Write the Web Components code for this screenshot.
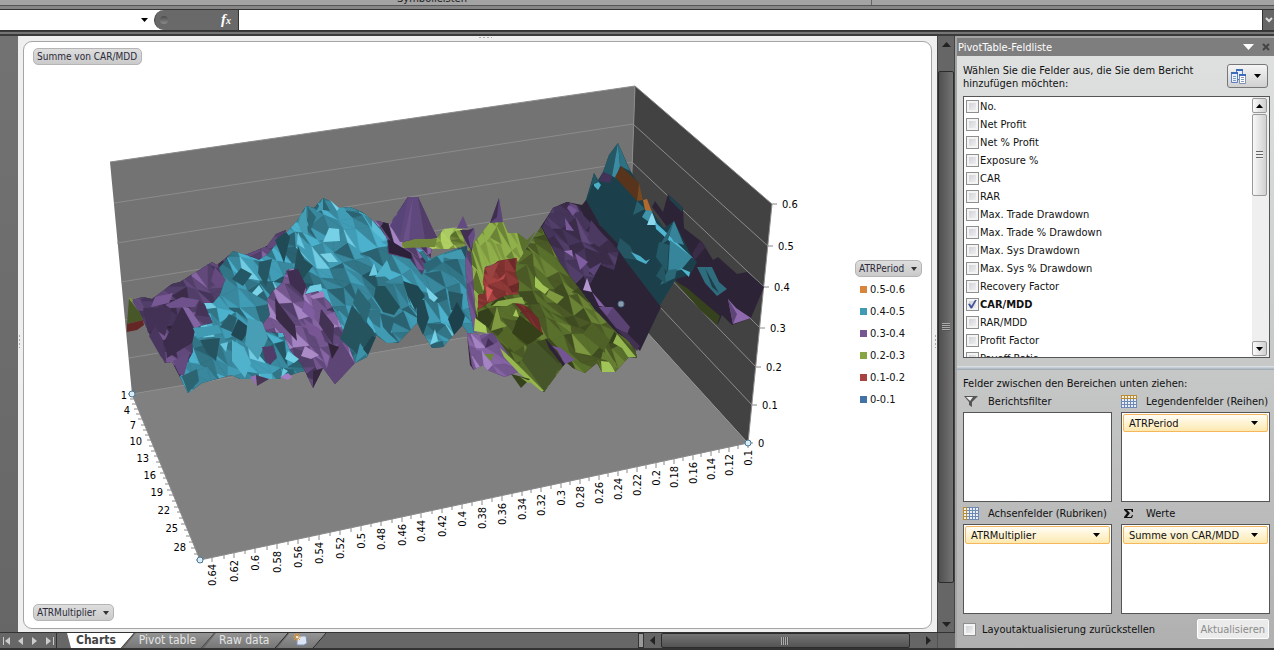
<!DOCTYPE html>
<html lang="de">
<head>
<meta charset="utf-8">
<title>PivotChart</title>
<style>
  html, body { height: 100%; margin: 0; }
  body {
    font: 11px/13px "DejaVu Sans Condensed", "Noto Sans", sans-serif;
    color: #111;
    background: #686868;
    overflow: hidden;
  }
</style>
</head>
<body>
<excel-window>
  <formula-bar slot="formula"></formula-bar>
  <pivot-chart slot="chart"></pivot-chart>
  <sheet-tabs slot="tabs"></sheet-tabs>
  <field-list slot="pane"></field-list>
</excel-window>

<script>
class ExcelWindow extends HTMLElement {
  constructor() {
    super();
    this.attachShadow({ mode: 'open' }).innerHTML = `
      <style>
        :host { display: flex; flex-direction: column; height: 100vh; }
        .ribbon {
          display: flex;
          flex: none;
          height: 5px;
          overflow: hidden;
          background: #a3a3a3;
          border-bottom: 1px solid #555;
        }
        .group {
          display: flex;
          align-items: flex-end;
          justify-content: center;
          flex: none;
          width: 872px;
          padding-right: 7px;
          box-sizing: border-box;
          border-right: 1px solid #666;
          color: #222;
        }
        .band { flex: none; height: 3px; background: #858585; border-bottom: 1px solid #333; }
        .gap { flex: none; height: 2px; background: #757575; border: solid #3a3a3a; border-width: 1px 0 2px; }
        .main { display: flex; flex: 1; min-height: 0; }
        .left { display: flex; flex-direction: column; flex: 1; min-width: 0; }
        .sheet { display: flex; flex: 1; min-height: 0; }
        .gutter { width: 18px; flex: none; background: linear-gradient(#727272, #666); }
        ::slotted(pivot-chart) { flex: 1; min-width: 0; }
        .foot { flex: none; height: 2px; background: #333; }
      </style>
      <div class="ribbon"><div class="group">Symbolleisten</div></div>
      <div class="band"></div>
      <slot name="formula"></slot>
      <div class="gap"></div>
      <div class="main">
        <div class="left">
          <div class="sheet">
            <div class="gutter"></div>
            <slot name="chart"></slot>
            <dark-scroll vertical></dark-scroll>
          </div>
          <slot name="tabs"></slot>
        </div>
        <slot name="pane"></slot>
      </div>
      <div class="foot"></div>
    `;
  }
}

class FormulaBar extends HTMLElement {
  constructor() {
    super();
    this.attachShadow({ mode: 'open' }).innerHTML = `
      <style>
        :host { display: flex; flex: none; height: 20px; background: #fff; border-bottom: 1px solid #333; }
        input { border: 0; padding: 0 4px; outline: 0; font: inherit; background: #fff; min-width: 0; box-sizing: border-box; }
        .name { width: 134px; }
        button { border: 0; padding: 0; background: none; }
        .drop { width: 20px; }
        .fx {
          display: flex;
          justify-content: space-between;
          align-items: center;
          width: 85px;
          padding: 0 7px 0 5px;
          box-sizing: border-box;
          background: #696969;
          border-left: 1px solid #444;
          border-right: 1px solid #333;
          border-radius: 10px 0 0 10px;
          color: #fff;
          font: italic bold 15px/18px "Liberation Serif", serif;
        }
        .fx i { width: 8px; height: 8px; border-radius: 4px; background: linear-gradient(#4c4c4c, #8a8a8a); }
        .fx small { font-size: 10px; }
        .text { flex: 1; }
        .expand { width: 12px; background: #666; border-left: 1px solid #333; }
        svg { display: block; margin: auto; }
      </style>
      <input class="name" aria-label="Namenfeld">
      <button class="drop" aria-label="Namen"><svg width="7" height="4"><path d="M0 0h7L3.500 4z" fill="#000"/></svg></button>
      <div class="fx"><i></i><span>f<small>x</small></span></div>
      <input class="text" aria-label="Bearbeitungsleiste">
      <button class="expand" aria-label="Erweitern"><svg width="8" height="6"><path d="M1 1l3 3 3-3" fill="none" stroke="#ddd" stroke-width="2"/></svg></button>
    `;
  }
}

class DarkScroll extends HTMLElement {
  constructor() {
    super();
    this.attachShadow({ mode: 'open' }).innerHTML = `
      <style>
        :host { display: flex; flex: none; background: #666; box-sizing: border-box; }
        :host([vertical]) { flex-direction: column; width: 18px; border: solid #444; border-width: 0 1px; }
        button { border: 0; padding: 0; background: none; flex: none; width: 17px; }
        svg { display: block; margin: auto; }
        .track { flex: 1; display: flex; }
        .thumb {
          display: flex;
          align-items: center;
          justify-content: center;
          box-sizing: border-box;
          border: 1px solid #2c2c2c;
          border-radius: 2px;
          background: linear-gradient(#747474, #545454);
        }
        :host([vertical]) button { width: 16px; height: 16px; }
        :host([vertical]) .track { flex-direction: column; padding-top: 19px; }
        :host([vertical]) .thumb { height: 94%; flex: none; width: 16px; background: linear-gradient(90deg, #4f4f4f, #747474); }
        :host(:not([vertical])) .thumb { width: 96%; }
        .grip { width: 8px; height: 8px; background: repeating-linear-gradient(90deg, #aaa 0 1px, #555 1px 2px); }
        :host([vertical]) .grip { background: repeating-linear-gradient(#aaa 0 1px, #555 1px 2px); }
      </style>
      <button class="a"></button>
      <div class="track"><div class="thumb"><div class="grip"></div></div></div>
      <button class="b"></button>
    `;
  }

  connectedCallback() {
    const v = this.hasAttribute('vertical');
    const arrows = v ? ['M0 6h9L4.500 1z', 'M0 1h9L4.500 6z'] : ['M6 0v9L1 4.500z', 'M1 0v9L6 4.500z'];
    this.shadowRoot.querySelectorAll('button').forEach((b, i) => {
      b.setAttribute('aria-label', i ? 'Weiter' : 'Zurück');
      b.innerHTML = `<svg width="${v ? 9 : 7}" height="${v ? 7 : 9}"><path d="${arrows[i]}" fill="#222"/></svg>`;
    });
  }
}

class SheetTabs extends HTMLElement {
  constructor() {
    super();
    this.attachShadow({ mode: 'open' }).innerHTML = `
      <style>
        :host { display: flex; flex: none; height: 16px; box-sizing: border-box; background: #676767; border-top: 1px solid #333; }
        button { border: 0; padding: 0; background: none; color: #e4e4e4; }
        .nav { display: flex; width: 56px; flex: none; border-right: 1px solid #333; }
        .nav button { width: 14px; }
        .nav svg { display: block; margin: auto; }
        .tabs { display: flex; flex: 1; padding-left: 10px; min-width: 0; }
        .tab {
          flex: none;
          height: 15px;
          padding: 0 18px 0 15px;
          font: 12px/15px "DejaVu Sans Condensed", sans-serif;
          background: linear-gradient(#949494, #777);
          clip-path: polygon(0 100%, 12px 0, 100% 0, calc(100% - 13px) 100%);
          margin-left: -10px;
        }
        .edge { flex: none; width: 14px; height: 15px; margin-left: -14px; }
        .tab.on { background: #fff; color: #444; font-weight: bold; clip-path: polygon(0 0, 100% 0, calc(100% - 13px) 100%, 4px 100%); padding-left: 9px; margin-left: 0; }
        .split { width: 4px; flex: none; border: 1px solid #333; background: #999; }
        dark-scroll { width: 293px; }
        .corner { width: 18px; flex: none; border-left: 1px solid #505050; box-sizing: border-box; }
      </style>
      <div class="nav">
        <button aria-label="Erstes Blatt"><svg width="9" height="8"><path d="M0 0h1v8H0zM7 0v8L2 4z" fill="#ccc"/></svg></button>
        <button aria-label="Vorheriges Blatt"><svg width="6" height="8"><path d="M5 0v8L0 4z" fill="#ccc"/></svg></button>
        <button aria-label="Nächstes Blatt"><svg width="6" height="8"><path d="M0 0v8l5-4z" fill="#ccc"/></svg></button>
        <button aria-label="Letztes Blatt"><svg width="9" height="8"><path d="M8 0h1v8H8zM1 0v8l5-4z" fill="#ccc"/></svg></button>
      </div>
      <div class="tabs">
        <button class="tab on">Charts</button>
        <svg class="edge"><path d="M14 0L1 15" stroke="#222"/></svg>
        <button class="tab">Pivot table</button>
        <svg class="edge"><path d="M14 0L1 15" stroke="#222"/></svg>
        <button class="tab">Raw data</button>
        <svg class="edge"><path d="M14 0L1 15" stroke="#222"/></svg>
        <button class="tab" aria-label="Neues Blatt"><svg width="15" height="14"><path d="M4 3h9l1 7-3 2H4z" fill="#dbe5f5" stroke="#7d93b5"/><path d="M4 0v8M0 4h8M1 1l6 6M7 1L1 7" stroke="#e69a2e"/><circle cx="4" cy="4" r="1" fill="#fff"/></svg></button>
        <svg class="edge"><path d="M14 0L1 15" stroke="#222"/></svg>
      </div>
      <div class="split"></div>
      <dark-scroll></dark-scroll>
      <div class="corner"></div>
    `;
  }
}

const CYAN = ['#1c404b', '#245461', '#2a6271', '#317586', '#39889e', '#419cb6', '#4cb1cd', '#70cce3'];
const PURPLE = ['#2d2337', '#3b2d49', '#46355a', '#523f69', '#614a7b', '#74578f', '#8765a5', '#a484c2'];
const GREEN = ['#36411d', '#3f4c21', '#4a5926', '#59702d', '#6b8336', '#7d9840', '#90b04b', '#b0d063'];
const RED = ['#5c2423', '#6c2a29', '#7d3130', '#8d3937', '#a34140', '#d15f5d'];
const DARK_GREEN = GREEN.slice(0, 6);
const DARK_PURPLE = PURPLE.slice(0, 5);
const STREAKS = GREEN.slice(3, 7);

// Bands of the surface, back to front: palette, outline, cell width, cell height, light bias.
// A band without a cell size is one flat plane.
const BANDS = [
  [[PURPLE[0]], '652,207 655,201 663,212 668,194 683,208 684,228 702,242 713,260 718,257 737,274 747,272 764,287 751,318 732,325 722,315 718,324 675,280 690,257'],
  [[GREEN[0]], '675,281 687,288 720,316 717,325 700,310'],
  [PURPLE, '374,220 390,224 408,197 418,197 437,238 432,248 428,270 422,277 410,260 388,255 386,240', 9, 16, -.1],
  [GREEN, '402,243 410,240 437,238 443,230 450,228 462,229 465,246 450,249 432,249 425,245 403,248', 9, 8, .2],
  [[CYAN[0]], '585,203 594,173 598,180 603,172 609,155 618,143 630,170 638,183 645,205 652,211 664,228 674,221 692,257 697,262 690,275 676,279 659,307 640,290 625,268 615,250 600,225'],
  [[PURPLE[0]], '540,228 553,208 567,202 582,205 586,200 600,225 617,243 625,260 661,307 640,351 632,343 617,333 595,310 578,287 560,263'],
  [DARK_PURPLE, '542,227 553,208 567,202 579,206 584,216 598,230 610,241 619,251 614,270 600,265 591,283 578,287 560,263', 12, 14, -.15],
  [DARK_GREEN, '541,227 560,263 578,287 595,310 617,333 634,344 637,358 629,357 615,372 602,372 597,363 585,373 573,368 566,362 544,392 520,372 507,357 493,335 475,323 474,290 480,270 517,262', 11, 13, -.15],
  [STREAKS, '468,250 482,233 490,222 503,222 508,233 518,233 527,240 536,231 518,262 516,258 486,266 485,285 476,312 473,290', 5, 26, .15],
  [RED, '485,267 492,266 498,261 517,258 515,273 519,283 518,294 507,295 495,300 488,303 478,310 478,295 486,293 483,283', 11, 11, -.05],
  [RED.slice(0, 4), '513,301 527,307 538,318 543,335 530,322 522,312', 10, 12, -.2],
  [PURPLE.slice(3), '467,333 480,335 493,333 505,350 518,372 505,377 487,370 483,365 473,370', 10, 11, 0],
  [PURPLE.slice(3, 6), '467,250 471,252 477,333 468,333 463,270', 6, 30, .1],
  [PURPLE, '132,300 143,297 152,299 172,284 180,282 212,262 217,265 232,253 243,256 267,246 276,234 286,230 275,255 240,270 225,280 220,300 213,325 200,333 194,352 187,363 180,377 172,362 165,363 150,335 140,313', 15, 12, -.15],
  [CYAN, '219,268 233,251 246,255 259,260 268,254 285,234 297,221 306,206 314,208 323,198 332,202 339,208 350,207 362,212 372,220 380,228 387,239 388,254 410,259 422,275 427,263 416,248 422,250 430,259 447,252 467,246 465,260 467,297 474,333 468,333 462,325 443,347 432,348 417,323 398,343 387,343 376,335 367,357 355,363 300,372 278,379 240,379 231,375 202,383 188,393 180,377 187,363 193,352 192,328 213,323 204,303 213,303 220,295 225,280', 13, 14, -.02],
  [PURPLE, '287,270 297,268 307,288 305,295 317,290 330,303 340,323 355,363 335,384 323,368 313,388 302,365 290,350 283,333 267,332 262,325 270,315 267,300 272,292 282,283', 13, 14, .1]
];

// Single facets drawn over the bands
const FACETS = [
  ['#1f414b', '668,194 683,208 682,212 670,200'], ['#2f6d7e', '697,267 712,267 719,282 727,289 717,296 705,283'],
  ['#1d3f4a', '705,268 719,293 712,287'], ['#8e69ad', '728,299 736,308 751,318 733,324'], ['#5d4577', '728,299 737,314 733,324'],
  ['#3a2b46', '700,241 706,247 695,260 692,254'],
  ['#265765', '618,143 609,155 603,172 612,176'], ['#3b8ba2', '618,143 612,176 616,178 620,166'], ['#2f7083', '618,143 630,171 620,166'],
  ['#43325a', '603,172 612,176 610,183 599,181'], ['#57341b', '621,166 639,183 637,201 615,177'], ['#7a481f', '639,183 643,200 637,201'],
  ['#b3692d', '643,200 647,199 652,212 645,210'], ['#4cafc9', '594,183 597,180 601,185 598,190 594,186'],
  ['#245561', '594,173 599,182 592,185 587,200'], ['#29606f', '637,201 645,209 633,215'], ['#3f94aa', '646,210 652,211 649,222 642,217'],
  ['#8ad9ed', '652,212 657,225 647,225'], ['#4fb7d2', '655,222 670,236 694,259 676,247 656,229'], ['#37839a', '674,221 684,245 674,242 668,232'],
  ['#2b6575', '674,221 668,240 660,245'], ['#37859b', '670,240 692,257 681,270 668,272'], ['#245a68', '659,242 669,245 667,272 656,257'],
  ['#2b6979', '668,270 677,269 675,278 660,285'], ['#245663', '664,262 666,284 656,276'], ['#51b9d3', '680,268 690,272 689,277'],
  ['#255562', '620,238 630,246 637,260 624,258 617,248'], ['#4cafca', '631,252 640,256 646,261 650,259 646,264 637,260'],
  ['#b495d0', '587,278 592,292 583,290'], ['#8763a8', '592,292 605,307 599,306'], ['#5a4373', '599,307 613,307 630,327 627,334 616,328'],
  ['#6a4e87', '599,307 613,307 607,316'], ['#423153', '616,329 627,333 640,346 637,351 629,342'],
  ['#735693', '569,205 577,210 573,216 567,208'], ['#79599a', '565,218 574,231 566,230'], ['#4c3961', '591,220 600,231 608,240 599,247 588,239'],
  ['#7e5ea0', '575,253 588,262 580,270'], ['#9670b7', '564,251 572,250 573,257'], ['#5c4579', '588,270 602,262 594,276'],
  ['#5b4478', '499,198 503,222 490,223'], ['#3e2f50', '499,198 497,217 490,223'], ['#634a80', '463,216 468,228 457,228'],
  ['#422f51', '460,230 468,230 474,228 472,252 466,242'], ['#654b84', '474,228 475,235 471,250 468,237'],
  ['#5f487c', '408,197 418,197 437,238 400,242 390,225'], ['#513d68', '418,197 437,238 425,239'], ['#6b5189', '413,197 409,240 403,241'],
  ['#59447a', '408,197 400,238 390,226'], ['#a9ca66', '443,229 455,228 449,238'], ['#70863a', '402,243 415,239 437,239 435,247 404,248'],
  ['#2c2138', '388,239 411,253 412,259 389,253'],
  ['#9a4340', '485,268 499,262 491,281'], ['#cf5a58', '486,286 493,290 487,302'], ['#b04a48', '497,281 506,273 504,279'],
  ['#343f1b', '478,312 488,308 494,316 489,328 478,323'], ['#a9cb5c', '475,318 486,326 487,333 474,331'],
  ['#7f9a41', '497,306 501,321 507,326 491,331'], ['#354019', '519,315 533,325 543,334 534,341 527,345 512,333'],
  ['#536627', '507,326 515,338 525,345 514,352 497,337'], ['#a5c65a', '516,309 519,317 513,316'], ['#8cab4b', '498,301 522,297 525,304 513,303 507,306 492,306'],
  ['#a2c457', '535,276 543,285 549,289 545,294 535,287'], ['#7e9940', '549,290 564,297 557,304 546,296'], ['#47562a', '528,344 547,345 563,363 544,392 520,365'],
  ['#3b4820', '536,342 549,338 564,354 559,364'], ['#566a2c', '521,359 544,391 518,371'], ['#96b74e', '500,348 512,359 544,391 541,391 518,372 504,357'],
  ['#506127', '592,322 610,340 604,351 583,334'], ['#94b74f', '617,334 636,357 628,357 622,348 613,343'], ['#a0c457', '601,361 610,362 615,372 602,372'],
  ['#657e34', '603,351 616,363 615,370 608,361 601,359'], ['#745594', '549,345 561,348 575,360 565,364 557,350'], ['#2e2139', '545,338 553,347 565,364 563,366 549,348'],
  ['#36421b', '511,374 530,379 521,388'], ['#8ba94a', '520,377 533,382 528,383'], ['#36223e', '467,335 472,366 474,370 470,365'],
  ['#6b843a', '484,354 494,354 491,361'], ['#462f5a', '488,338 494,344 485,348'],
  ['#7b9a3e', '129,297 133,300 131,304'], ['#475728', '129,299 140,313 143,320 127,324'], ['#642725', '127,324 143,320 144,325 137,330 127,332'],
  ['#433255', '143,308 172,307 165,336 154,329 148,333'], ['#3b2c4b', '182,306 195,331 192,343 167,358 165,340'], ['#8465a4', '182,306 189,308 201,325 195,329'],
  ['#453458', '199,301 205,305 209,317 195,315'], ['#6f528c', '165,305 182,297 199,300 195,307 170,308'], ['#493760', '149,336 155,326 163,340 166,361 161,357'],
  ['#634a7f', '173,361 190,352 184,376 179,374'], ['#785795', '155,297 173,293 169,303 151,307'], ['#66497f', '215,267 226,280 218,288 211,281'],
  ['#2c6472', '182,376 197,369 199,381 188,393'], ['#409ab2', '193,328 218,325 222,333 197,338'], ['#265360', '200,340 220,338 216,361 207,353'],
  ['#2a5d6b', '220,327 229,314 237,318 232,332'], ['#204753', '238,319 250,328 242,341 231,335'], ['#255866', '241,268 252,274 243,286 232,279'],
  ['#65c5dc', '220,344 228,342 226,352'], ['#51b2cb', '232,340 244,347 251,363 245,378 232,361'], ['#489eb5', '248,318 262,322 268,338 258,360 245,344'],
  ['#7ad3e7', '259,285 263,291 257,296 252,293'], ['#255663', '259,262 272,259 266,287 258,273'], ['#71cfe5', '288,351 299,359 294,363 285,359'],
  ['#67c8df', '283,368 288,371 281,378'], ['#a77cc6', '280,377 288,373 292,377 288,380'], ['#513b68', '262,347 273,346 277,357 270,365 265,360'],
  ['#9470b1', '250,377 256,375 256,385'], ['#493556', '256,375 269,379 257,386'], ['#204a56', '275,240 286,232 290,237 284,263'],
  ['#459db3', '306,206 308,235 301,231 298,224'], ['#2c6776', '307,206 316,217 309,234'], ['#429bb2', '323,198 323,210 316,212'],
  ['#2a6371', '323,198 330,211 323,210'], ['#76d2e8', '330,200 339,208 337,211'], ['#77d1e6', '329,228 339,229 340,241 323,242'],
  ['#78d0e4', '320,254 331,253 338,262 328,262'], ['#68c7df', '298,232 305,249 297,244'], ['#6fcce2', '310,286 321,284 322,290 305,294'],
  ['#234f5b', '298,246 303,258 313,266 302,280 294,270'], ['#a380bd', '310,296 323,291 325,297 313,299'], ['#aa8bc5', '301,356 305,346 319,355 311,359'],
  ['#392a46', '275,298 295,325 297,341 276,319'], ['#3f2e4f', '287,271 298,269 306,286 303,296 290,284'], ['#433253', '321,309 334,325 333,345 319,324'],
  ['#36273f', '313,371 323,368 313,388'], ['#5d4575', '330,355 341,341 355,363 335,384 326,372'], ['#312439', '328,343 339,347 332,359'],
  ['#785694', '303,318 320,329 325,341 309,334'], ['#805ca0', '305,300 315,311 314,321 302,311'],
  ['#25545f', '352,305 373,330 375,335 360,357 340,339'], ['#3c92a9', '360,343 367,353 355,363'], ['#1f4550', '372,336 376,337 368,355 363,349'],
  ['#2a6673', '358,288 371,305 366,324 353,303'], ['#6dcbe1', '374,263 378,275 369,276'], ['#4db1ca', '387,260 393,276 375,277'],
  ['#215059', '376,286 385,286 400,307 394,315 383,312 374,297'], ['#1e4751', '403,281 418,286 425,296 415,310 409,301'], ['#2a6170', '380,313 395,318 390,335 383,327'],
  ['#409ab1', '372,323 388,333 398,342 387,343 377,335'], ['#204852', '417,300 424,300 429,318 423,335 417,322'], ['#79d2e7', '426,287 438,298 434,302 429,298'],
  ['#76d0e6', '435,329 438,341 430,345'], ['#265763', '448,291 463,294 461,311 451,310'], ['#1c414c', '457,302 465,316 462,326 454,335 448,319'],
  ['#59b9d0', '408,296 415,310 412,307'], ['#5bbdd6', '372,220 386,237 384,241 372,230'], ['#2b6776', '423,264 437,256 442,263 427,273'],
  ['#419ab0', '439,256 461,249 466,259 450,259'], ['#27515e', '463,250 467,246 466,260']
];

const BACK_AXIS = [[110, 162, 635, 86, 772, 204], [114, 203, 633, 124, 768, 246], [117, 243, 632, 162, 764, 287], [121, 282, 631, 199, 760, 328], [125, 320, 629, 236, 756, 367], [129, 358, 628, 273, 752, 405], [132, 394, 627, 310, 748, 443]];
const PERIODS = [[1, 126, 399], [4, 129, 414], [7, 135, 429], [10, 141, 445], [13, 148, 462], [16, 155, 479], [19, 162, 496], [22, 169, 514], [25, 177, 532], [28, 185, 551]];
const MULTIPLIER_X = [212, 234, 255, 277, 298, 319, 340, 361, 381, 402, 421, 442, 462, 482, 502, 522, 541, 561, 580, 599, 618, 637, 656, 674, 693, 711, 729, 748];

function hash(a, b, c) {
  const s = Math.sin(a * 127.1 + b * 311.7 + c * 74.7) * 43758.5453;
  return s - Math.floor(s);
}

class SurfacePlot extends HTMLElement {
  constructor() {
    super();
    this.attachShadow({ mode: 'open' }).innerHTML = `
      <style>
        :host { display: block; overflow: hidden; }
        svg { display: block; width: 100%; height: 100%; }
        text { font: 11px "DejaVu Sans Condensed", sans-serif; fill: #000; }
      </style>
      <svg role="img" aria-label="Summe von CAR/MDD"><g transform="translate(-24 -42)">${this.room()}${this.surface()}${this.axes()}</g></svg>
    `;
  }

  room() {
    const lines = BACK_AXIS.slice(1, 6).map(a =>
      `<path d="M${a[0]} ${a[1]}L${a[2]} ${a[3]}L${a[4]} ${a[5]}" fill="none" stroke="#8b8b8b"/>`).join('');
    return `
      <path d="M110 162L635 86L627 310L132 394z" fill="#737373"/>
      <path d="M635 86L772 204L748 443L627 310z" fill="#424242"/>
      <path d="M132 394L627 310L748 443L200 560z" fill="#808080"/>
      ${lines}
      <path d="M110 162L635 86L772 204L748 443M635 86L627 310M132 394L627 310" fill="none" stroke="#8b8b8b"/>`;
  }

  surface() {
    const bands = BANDS.map((b, i) => this.band(b, i)).join('');
    const facets = FACETS.map(f => `<polygon points="${f[1]}" fill="${f[0]}"/>`).join('');
    return bands + facets;
  }

  band([palette, outline, w, h, bias], index) {
    const base = `<polygon points="${outline}" fill="${palette[0]}"/>`;
    if (!w) return base;
    const pts = outline.split(' ').map(p => p.split(',').map(Number));
    const x0 = Math.min(...pts.map(p => p[0])) - 30, x1 = Math.max(...pts.map(p => p[0])) + 20;
    const y0 = Math.min(...pts.map(p => p[1])) - 20, y1 = Math.max(...pts.map(p => p[1])) + 40;
    const rows = Math.ceil((y1 - y0) / h), cols = Math.ceil((x1 - x0) / w) + 8;
    // each row leans to the right, as the depth axis does
    const node = (r, c) => [
      x0 - 60 - rows * h * .4 + c * w + r * h * .4 + (hash(r, c, index) - .5) * w * .5,
      y0 + r * h + (hash(c, r, index + 9) - .5) * h * 1.1
    ];
    let out = '';
    const tri = (a, b, c, seed, cell) => {
      const tilt = (b[1] - a[1]) / w * .2 + (seed - .5) * .2 + (cell - .5) * .45;
      const k = Math.round((.5 + bias + tilt) * (palette.length - 1));
      const fill = palette[Math.max(0, Math.min(palette.length - 1, k))];
      const d = [a, b, c].map(p => p.map(Math.round).join()).join(' ');
      out += `<polygon points="${d}" fill="${fill}" stroke="${fill}" stroke-width=".6"/>`;
    };
    for (let r = 0; r < rows; r++) {
      for (let c = 0; c < cols + rows; c++) {
        const a = node(r, c), b = node(r, c + 1), d = node(r + 1, c), e = node(r + 1, c + 1);
        const cell = hash(r, c, 11 + index);
        tri(a, b, e, hash(r, c, 3 + index) + .2, cell);
        tri(a, e, d, hash(r, c, 5 + index) - .2, cell);
      }
    }
    return `${base}<clipPath id="band${index}"><polygon points="${outline}"/></clipPath><g clip-path="url(#band${index})">${out}</g>`;
  }

  axes() {
    let out = '<path d="M132 394L200 560L748 443" fill="none" stroke="#888"/>';
    BACK_AXIS.forEach((a, i) => {
      out += `<path d="M${a[4]} ${a[5]}h5" stroke="#888"/><text x="${a[4] + 10}" y="${a[5] + 4}">${i === 6 ? 0 : (6 - i) / 10}</text>`;
    });
    for (let i = 0; i <= 30; i++) {
      const t = i / 30 * (.9 + .1 * i / 30);
      const x = Math.round(132 + 68 * t), y = Math.round(394 + 166 * t);
      out += `<path d="M${x} ${y}h-4" stroke="#888"/>`;
    }
    PERIODS.forEach(([n, x, y]) => { out += `<text x="${x + 1}" y="${y}" text-anchor="end">${n}</text>`; });
    MULTIPLIER_X.forEach((x, i) => {
      const y = Math.round(560 - (x - 200) * .2135);
      out += `<path d="M${x} ${y}v5M${x - 10} ${y + 2}v4" stroke="#888"/>`;
      out += `<text transform="translate(${x + 4} ${y + 7}) rotate(-90)" text-anchor="end">${(64 - 2 * i) / 100}</text>`;
    });
    [[132, 394], [200, 560], [748, 443], [621, 304]].forEach(([x, y]) => {
      out += `<circle cx="${x}" cy="${y}" r="3" fill="${x === 621 ? '#8f9ba6' : '#d8edf5'}" stroke="#4a7597"/>`;
    });
    return out;
  }
}

class PivotButton extends HTMLElement {
  constructor() {
    super();
    this.attachShadow({ mode: 'open' }).innerHTML = `
      <style>
        :host { display: block; width: max-content; }
        button {
          display: flex;
          align-items: center;
          gap: 7px;
          height: 17px;
          padding: 0 4px 0 3px;
          border: 1px solid #b5b5b5;
          border-radius: 5px;
          background: linear-gradient(#dedede, #cacaca);
          font: 10px/13px "DejaVu Sans Condensed", sans-serif;
          color: #2a2a3a;
          white-space: nowrap;
        }
        :host(:not([menu])) svg { display: none; }
      </style>
      <button><slot></slot><svg width="6" height="4"><path d="M0 0h6L3 4z" fill="#333"/></svg></button>
    `;
  }
}

class PivotChart extends HTMLElement {
  constructor() {
    super();
    const legend = [['0.5-0.6', '#d9853b'], ['0.4-0.5', '#3f9bb3'], ['0.3-0.4', '#745693'], ['0.2-0.3', '#87a543'], ['0.1-0.2', '#a74341'], ['0-0.1', '#4272a6']];
    this.attachShadow({ mode: 'open' }).innerHTML = `
      <style>
        :host { display: flex; position: relative; padding: 5px 5px 3px; background: #efefef; box-sizing: border-box; }
        .area { flex: 1; display: flex; min-width: 0; border: 1px solid #a5a5a5; border-radius: 9px; background: #fff; overflow: hidden; }
        surface-plot { flex: 1; }
        .value { position: absolute; left: 15px; top: 12px; }
        .axis { position: absolute; left: 15px; bottom: 11px; }
        .legend { position: absolute; right: 13px; top: 224px; width: 69px; }
        ul { list-style: none; margin: 0; padding: 1px 0 0 5px; }
        li { display: flex; align-items: center; gap: 3px; height: 22px; }
        li i { width: 7px; height: 7px; }
        .grip { position: absolute; width: 14px; height: 3px; background: radial-gradient(circle, #aaa 1px, transparent 1px) 0 0 / 4px 3px; }
        .top { top: 0; left: 50%; }
        .side { width: 3px; height: 14px; top: 50%; background-size: 3px 4px; }
        .l { left: 0; }
        .r { right: 0; }
      </style>
      <div class="area"><surface-plot></surface-plot></div>
      <pivot-button class="value">Summe von CAR/MDD</pivot-button>
      <div class="legend">
        <pivot-button menu>ATRPeriod</pivot-button>
        <ul>${legend.map(l => `<li><i style="background:${l[1]}"></i>${l[0]}</li>`).join('')}</ul>
      </div>
      <pivot-button class="axis" menu>ATRMultiplier</pivot-button>
      <div class="grip top"></div><div class="grip side l"></div><div class="grip side r"></div>
    `;
  }
}

class FieldItem extends HTMLElement {
  constructor() {
    super();
    this.attachShadow({ mode: 'open' }).innerHTML = `
      <style>
        :host { display: block; }
        label { display: flex; align-items: center; gap: var(--gap, 1px); height: 18px; white-space: nowrap; }
        :host([checked]) label { font-weight: bold; }
        input {
          appearance: none;
          width: 13px;
          height: 13px;
          margin: 0;
          flex: none;
          border: 1px solid #8e8f8f;
          background: linear-gradient(135deg, #c8ccd2, #f6f6f6);
          box-shadow: inset 0 0 0 2px #f4f4f4;
        }
        input:checked::after {
          content: "";
          display: block;
          width: 9px;
          height: 9px;
          margin: 1px;
          background: #43559b;
          clip-path: polygon(0 50%, 20% 45%, 38% 70%, 80% 0, 100% 0, 45% 100%, 30% 100%);
        }
      </style>
      <label><input type="checkbox"><span><slot></slot></span></label>
    `;
  }

  connectedCallback() {
    this.shadowRoot.querySelector('input').checked = this.hasAttribute('checked');
  }
}

class DropArea extends HTMLElement {
  constructor() {
    super();
    this.attachShadow({ mode: 'open' }).innerHTML = `
      <style>
        :host { display: flex; flex-direction: column; min-width: 0; }
        .head { display: flex; align-items: center; gap: 9px; height: 22px; white-space: nowrap; }
        .head ::slotted(svg) { flex: none; }
        .box { height: 90px; box-sizing: border-box; border: 1px solid #555; background: #fff; padding: 1px; }
        button {
          display: flex;
          justify-content: space-between;
          align-items: center;
          width: 100%;
          height: 18px;
          padding: 0 9px 0 5px;
          border: 1px solid #f5b65c;
          border-radius: 2px;
          background: linear-gradient(#fffdf5, #fde9b0);
          font: inherit;
          color: #111;
          white-space: nowrap;
        }
      </style>
      <div class="head"><slot name="icon"></slot><span>${this.getAttribute('label')}</span></div>
      <div class="box"></div>
    `;
    const field = this.getAttribute('field');
    if (field) {
      this.shadowRoot.querySelector('.box').innerHTML =
        `<button>${field}<svg width="7" height="4"><path d="M0 0h7L3.500 4z" fill="#000"/></svg></button>`;
    }
  }
}

class FieldList extends HTMLElement {
  constructor() {
    super();
    const fields = ['No.', 'Net Profit', 'Net % Profit', 'Exposure %', 'CAR', 'RAR', 'Max. Trade Drawdown', 'Max. Trade % Drawdown', 'Max. Sys Drawdown', 'Max. Sys % Drawdown', 'Recovery Factor', 'CAR/MDD', 'RAR/MDD', 'Profit Factor', 'Payoff Ratio'];
    const grid = (head) => `<svg slot="icon" width="16" height="13"><path d="M0 0h16v13H0z" fill="#6e8ab4"/><path d="${head}" fill="#b98d35"/><path d="M1 1h2v2H1zM4 1h2v2H4zM7 1h2v2H7zM10 1h2v2h-2zM13 1h2v2h-2zM1 4h2v2H1zM4 4h2v2H4zM7 4h2v2H7zM10 4h2v2h-2zM13 4h2v2h-2zM1 7h2v2H1zM4 7h2v2H4zM7 7h2v2H7zM10 7h2v2h-2zM13 7h2v2h-2zM1 10h2v2H1zM4 10h2v2H4zM7 10h2v2H7zM10 10h2v2h-2zM13 10h2v2h-2z" fill="#fff" opacity=".85"/></svg>`;
    this.attachShadow({ mode: 'open' }).innerHTML = `
      <style>
        :host {
          display: flex;
          flex-direction: column;
          flex: none;
          width: 319px;
          box-sizing: border-box;
          border-left: 2px solid #a4a4a4;
          border-top: 2px solid #a4a4a4;
          background: linear-gradient(#e0e2e2, #b0b0b0);
        }
        button { font: inherit; }
        .title { display: flex; align-items: center; flex: none; height: 18px; padding: 0 4px 0 1px; background: #7e7e7e; color: #fff; }
        .title span { flex: 1; }
        .title button { border: 0; padding: 0; background: none; margin-left: 8px; }
        .title svg, .layout svg { display: block; }
        .intro { display: flex; justify-content: space-between; padding: 8px 6px 8px 6px; flex: none; height: 24px; }
        .layout {
          display: flex;
          align-items: center;
          gap: 7px;
          box-sizing: border-box;
          width: 41px;
          height: 24px;
          padding: 0 5px 0 3px;
          border: 1px solid #777;
          border-radius: 3px;
          background: linear-gradient(#f5f5f5, #d0d0d0);
        }
        .list { display: flex; flex: 1; min-height: 0; margin: 0 4px 0 6px; border: 1px solid #555; background: #fff; }
        .items { flex: 1; overflow: hidden; padding-left: 2px; }
        .scroll { display: flex; flex-direction: column; width: 17px; background: #efefef; padding: 1px 0; }
        .scroll button { flex: none; width: 15px; height: 15px; padding: 0; border: 1px solid #999; border-radius: 2px; background: linear-gradient(90deg, #fafafa, #cfcfcf); }
        .scroll button svg { display: block; margin: auto; }
        .track { flex: 1; padding-top: 1px; }
        .thumb { display: flex; align-items: center; justify-content: center; width: 13px; height: 80px; border: 1px solid #999; border-radius: 2px; background: linear-gradient(90deg, #f8f8f8, #d0d0d0); }
        .thumb i { width: 7px; height: 8px; background: repeating-linear-gradient(#666 0 1px, #eee 1px 3px); }
        .rule { flex: none; height: 4px; margin-top: 8px; background: linear-gradient(#e2e6ea, #9aa6b2); }
        .hint { flex: none; padding: 7px 6px 0; }
        .areas { display: grid; grid-template-columns: 1fr 1fr; gap: 0 9px; padding: 0 4px 0 6px; flex: none; }
        .foot { display: flex; align-items: center; justify-content: space-between; flex: none; height: 30px; padding: 0 5px 4px 6px; --gap: 6px; }
        .foot button { height: 20px; padding: 0 3px; border: 1px solid #fff; border-radius: 2px; background: #ebebeb; color: #8a8a8a; }
      </style>
      <div class="title">
        <span>PivotTable-Feldliste</span>
        <button aria-label="Menü"><svg width="11" height="6"><path d="M0 0h11L5.500 6z" fill="#fff"/></svg></button>
        <button aria-label="Schließen"><svg width="8" height="8"><path d="M1 1l6 6M7 1L1 7" stroke="#444" stroke-width="2"/></svg></button>
      </div>
      <div class="intro">
        <div>Wählen Sie die Felder aus, die Sie dem Bericht<br>hinzufügen möchten:</div>
        <button class="layout" aria-label="Layout">
          <svg width="16" height="17"><path d="M5.500 1.500h6v10h-6z" fill="#e8f0ff" stroke="#5a80bd"/><path d="M5 1h7v2H5z" fill="#3d6bb8"/><path d="M.5 4.500h6v10h-6z" fill="#e8f0ff" stroke="#5a80bd"/><path d="M0 4h7v2H0z" fill="#3d6bb8"/><path d="M8.500 6.500h6v9h-6z" fill="#fff" stroke="#7f93b5"/><path d="M8 6h7v2H8z" fill="#3d6bb8"/><path d="M10 9.500h3M10 11.500h3M10 13.500h3M2 8.500h3M2 10.500h3M2 12.500h3" stroke="#8899bb"/></svg>
          <svg width="7" height="4"><path d="M0 0h7L3.500 4z"/></svg>
        </button>
      </div>
      <div class="list">
        <div class="items">${fields.map(f => `<field-item${f === 'CAR/MDD' ? ' checked' : ''}>${f}</field-item>`).join('')}</div>
        <div class="scroll">
          <button aria-label="Nach oben"><svg width="7" height="4"><path d="M0 4h7L3.500 0z"/></svg></button>
          <div class="track"><div class="thumb"><i></i></div></div>
          <button aria-label="Nach unten"><svg width="7" height="4"><path d="M0 0h7L3.500 4z"/></svg></button>
        </div>
      </div>
      <div class="rule"></div>
      <div class="hint">Felder zwischen den Bereichen unten ziehen:</div>
      <div class="areas">
        <drop-area label="Berichtsfilter"><svg slot="icon" width="16" height="13"><path d="M1 1h14L9 7v5l-3-2V7z" fill="#555"/><path d="M3 2h7L7 6z" fill="#eee"/></svg></drop-area>
        <drop-area label="Legendenfelder (Reihen)" field="ATRPeriod">${grid('M0 0h16v4H0z')}</drop-area>
        <drop-area label="Achsenfelder (Rubriken)" field="ATRMultiplier">${grid('M0 0h4v13H0z')}</drop-area>
        <drop-area label="Werte" field="Summe von CAR/MDD"><svg slot="icon" width="16" height="13"><path d="M3 2h9v3h-1l-1-2H6l3 3-3 4h4l1-2h1l-1 3H3v-1l3-4-3-3z" fill="#111"/></svg></drop-area>
      </div>
      <div class="foot"><field-item>Layoutaktualisierung zurückstellen</field-item><button disabled>Aktualisieren</button></div>
    `;
  }
}

customElements.define('dark-scroll', DarkScroll);
customElements.define('surface-plot', SurfacePlot);
customElements.define('pivot-button', PivotButton);
customElements.define('field-item', FieldItem);
customElements.define('drop-area', DropArea);
customElements.define('field-list', FieldList);
customElements.define('sheet-tabs', SheetTabs);
customElements.define('pivot-chart', PivotChart);
customElements.define('formula-bar', FormulaBar);
customElements.define('excel-window', ExcelWindow);
</script>
</body>
</html>
